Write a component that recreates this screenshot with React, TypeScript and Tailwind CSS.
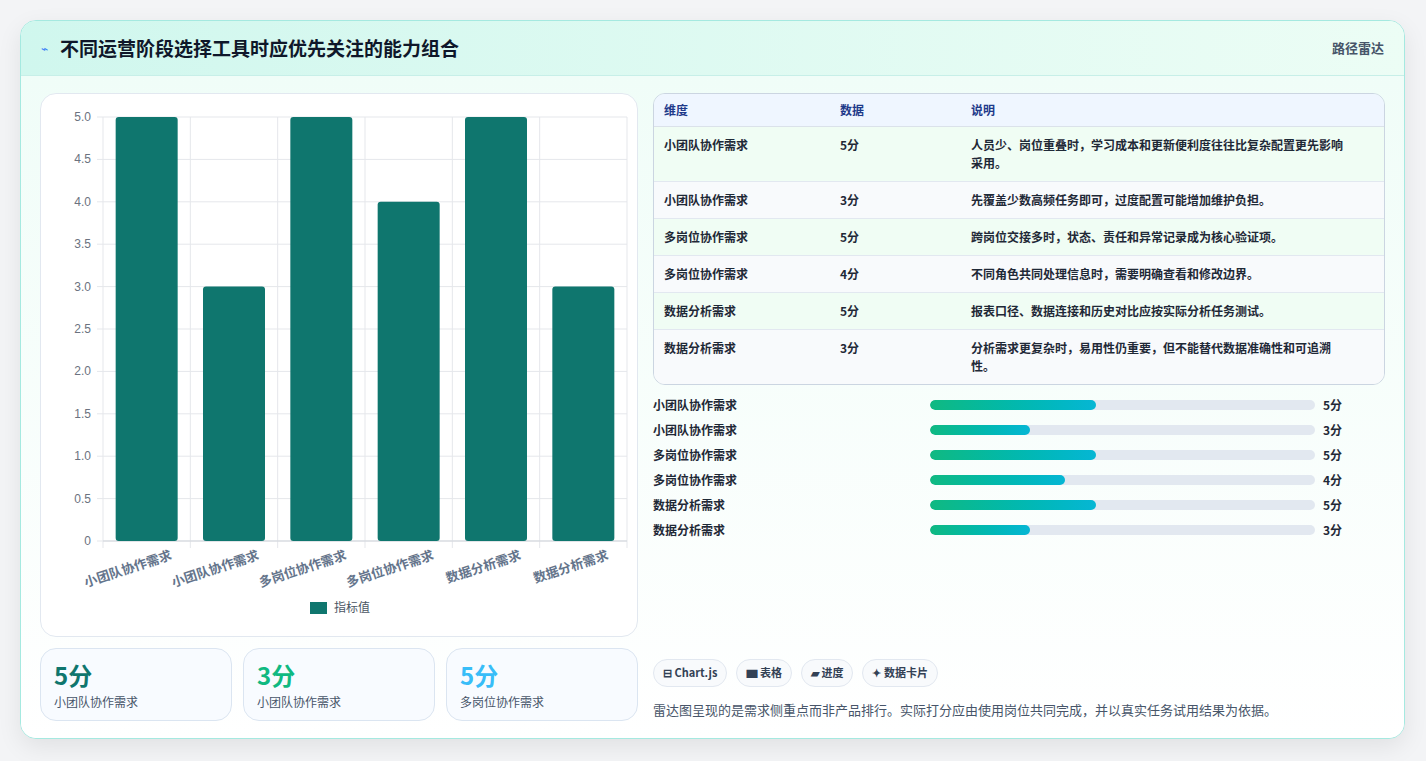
import React from "react";

const rows = [
  { name: "小团队协作需求", v: 5, note: "人员少、岗位重叠时，学习成本和更新便利度往往比复杂配置更先影响采用。" },
  { name: "小团队协作需求", v: 3, note: "先覆盖少数高频任务即可，过度配置可能增加维护负担。" },
  { name: "多岗位协作需求", v: 5, note: "跨岗位交接多时，状态、责任和异常记录成为核心验证项。" },
  { name: "多岗位协作需求", v: 4, note: "不同角色共同处理信息时，需要明确查看和修改边界。" },
  { name: "数据分析需求", v: 5, note: "报表口径、数据连接和历史对比应按实际分析任务测试。" },
  { name: "数据分析需求", v: 3, note: "分析需求更复杂时，易用性仍重要，但不能替代数据准确性和可追溯性。" },
];

const font = { fontFamily: '"Noto Sans CJK SC", "Noto Sans", sans-serif' };

function Chart() {
  const x0 = 62, x1 = 586, y0 = 23, y1 = 447;
  const cw = (x1 - x0) / 6;
  const ticks = [5, 4.5, 4, 3.5, 3, 2.5, 2, 1.5, 1, 0.5, 0];
  const yOf = (v: number) => y1 - (v / 5) * (y1 - y0);
  return (
    <svg width="596" height="540" className="block" style={font}>
      {ticks.map((t) => (
        <g key={t}>
          <line x1={x0 - 6} x2={x1} y1={yOf(t)} y2={yOf(t)} stroke="#e5e7eb" />
          <text x={x0 - 12} y={yOf(t) + 4} textAnchor="end" fontSize="12" fill="#6b7280" fontFamily="Liberation Sans, sans-serif">
            {t === 0 ? "0" : t.toFixed(1)}
          </text>
        </g>
      ))}
      {Array.from({ length: 7 }).map((_, i) => (
        <line key={i} x1={x0 + i * cw} x2={x0 + i * cw} y1={y0} y2={y1 + 7} stroke="#e5e7eb" />
      ))}
      <line x1={x0} x2={x1} y1={y1} y2={y1} stroke="#d1d5db" />
      {rows.map((r, i) => {
        const cx = x0 + i * cw + cw / 2;
        return (
          <g key={i}>
            <rect x={cx - 31} y={yOf(r.v)} width={62} height={y1 - yOf(r.v)} rx="3" fill="#0f766e" />
            <text x={cx + 26} y={y1 + 18} fontSize="13" fontWeight="600" fill="#64748b" textAnchor="end" transform={`rotate(-18 ${cx + 26} ${y1 + 18})`}>
              {r.name}
            </text>
          </g>
        );
      })}
      <rect x="269" y="508" width="17" height="12" fill="#0f766e" />
      <text x="293" y="518" fontSize="12" fill="#4b5563">指标值</text>
    </svg>
  );
}

export default function App() {
  const stats = [
    { v: "5分", c: "text-[#0f766e]", l: "小团队协作需求" },
    { v: "3分", c: "text-[#10b981]", l: "小团队协作需求" },
    { v: "5分", c: "text-[#38bdf8]", l: "多岗位协作需求" },
  ];
  return (
    <div className="w-[1426px] h-[761px] bg-[#f3f4f6] pt-5 pl-5" style={font}>
      <div className="w-[1385px] h-[719px] rounded-2xl border border-[#a5e9e0] bg-white overflow-hidden shadow-[0_8px_24px_rgba(0,0,0,0.08)] flex flex-col">
        <div className="h-[55px] shrink-0 flex items-center justify-between px-5 bg-gradient-to-r from-[#d0f7ee] to-[#ecfdf5] border-b border-[#c7efe8]">
          <div className="flex items-center gap-3">
            <span className="text-[#3b82f6] text-xs">⌁</span>
            <h1 className="text-[19px] font-bold text-[#0f172a]">不同运营阶段选择工具时应优先关注的能力组合</h1>
          </div>
          <span className="text-[13px] font-semibold text-[#475569]">路径雷达</span>
        </div>
        <div className="flex-1 flex gap-[15px] px-[19px] pt-[17px] bg-gradient-to-b from-[#f0fdf8] to-white">
          <div className="w-[599px] flex flex-col gap-[11px]">
            <div className="h-[544px] rounded-2xl border border-[#e2e8f0] bg-white">
              <Chart />
            </div>
            <div className="grid grid-cols-3 gap-[11px]">
              {stats.map((s, i) => (
                <div key={i} className="h-[73px] rounded-2xl border border-[#dbe5f1] bg-[#f8fbff] px-[13px] pt-[10px]">
                  <div className={`text-[24px] font-bold leading-8 ${s.c}`}>{s.v}</div>
                  <div className="text-[12px] text-[#475569] mt-[2px]">{s.l}</div>
                </div>
              ))}
            </div>
          </div>
          <div className="w-[734px] flex flex-col">
            <div className="rounded-xl border border-[#cbd5e1] overflow-hidden text-[12px]">
              <div className="grid grid-cols-[176px_131px_1fr] h-[33px] items-center bg-[#eff6ff] border-b border-[#dbe2ea] px-[10px] font-semibold text-[#1e3a8a]">
                <div>维度</div><div>数据</div><div>说明</div>
              </div>
              {rows.map((r, i) => (
                <div key={i} className={`grid grid-cols-[176px_131px_1fr] items-start px-[10px] py-[9px] font-semibold text-[#1f2937] ${i < 5 ? "border-b border-[#e2e8f0]" : ""} ${i % 2 === 0 ? "bg-[#f0fdf4]" : "bg-[#f8fafc]"}`}>
                  <div className="leading-[17px]">{r.name}</div>
                  <div className="leading-[17px]">{r.v}分</div>
                  <div className="leading-[18px] pr-6">{r.note}</div>
                </div>
              ))}
            </div>
            <div className="mt-[11px] flex flex-col gap-[7px] text-[12px] font-semibold text-[#1f2937]">
              {rows.map((r, i) => (
                <div key={i} className="flex items-center h-[18px]">
                  <div className="w-[277px]">{r.name}</div>
                  <div className="w-[385px] h-[10px] rounded-full bg-[#e2e8f0] overflow-hidden">
                    <div className="h-full rounded-full bg-gradient-to-r from-[#10b981] to-[#06b6d4]" style={{ width: `${r.v === 5 ? 43 : r.v === 4 ? 35 : 26}%` }} />
                  </div>
                  <div className="ml-[8px]">{r.v}分</div>
                </div>
              ))}
            </div>
            <div className="mt-auto mb-[19px]">
              <div className="flex gap-[9px] mb-[13px]">
                {["⊟ Chart.js", "▆ 表格", "▰ 进度", "✦ 数据卡片"].map((b) => (
                  <span key={b} className="h-[28px] px-[9px] flex items-center rounded-full border border-[#e2e8f0] bg-[#f8fafc] text-[11px] font-semibold text-[#334155]">{b}</span>
                ))}
              </div>
              <p className="text-[13px] text-[#475569]">雷达图呈现的是需求侧重点而非产品排行。实际打分应由使用岗位共同完成，并以真实任务试用结果为依据。</p>
            </div>
          </div>
        </div>
      </div>
    </div>
  );
}
